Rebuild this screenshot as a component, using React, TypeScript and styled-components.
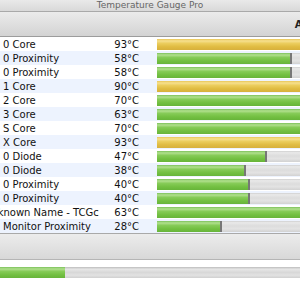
import React from "react";
import styled, { createGlobalStyle } from "styled-components";

const Global = createGlobalStyle`
  html, body { margin: 0; padding: 0; background: #fff; overflow: hidden; }
  #root { width: 300px; height: 300px; overflow: hidden; }
`;

const Window = styled.div`
  width: 300px;
  height: 300px;
  display: flex;
  flex-direction: column;
  font-family: "DejaVu Sans", "Noto Sans", sans-serif;
  background: #fff;
`;

const TitleBar = styled.div`
  height: 11px;
  border-bottom: 1px solid #a9a9a9;
  background: linear-gradient(#e9e9e9, #d9d9d9);
  display: flex;
  align-items: center;
  justify-content: center;
  font-size: 9px;
  color: #666;
  line-height: 1;
  overflow: hidden;
`;

const Toolbar = styled.div`
  height: 24px;
  border-bottom: 1px solid #9c9c9c;
  background: linear-gradient(#ebebeb, #d3d3d3);
  display: flex;
  align-items: center;
  justify-content: flex-end;
  overflow: hidden;
`;

const ToolLabel = styled.span`
  font-size: 10px;
  font-weight: bold;
  color: #222;
  margin-right: -6px;
  white-space: nowrap;
`;

const Table = styled.div`
  display: flex;
  flex-direction: column;
`;

const Row = styled.div<{ $alt: boolean }>`
  height: 14px;
  display: grid;
  grid-template-columns: 140px 17px 1fr;
  align-items: center;
  background: ${(p) => (p.$alt ? "#edf3fe" : "#ffffff")};
  font-size: 10px;
  color: #111;
  overflow: hidden;
`;

const Label = styled.span<{ $shift: number }>`
  padding-left: 3px;
  margin-left: ${(p) => p.$shift}px;
  white-space: nowrap;
  display: flex;
  justify-content: space-between;
  padding-right: 1px;
`;

const Temp = styled.span``;

const Track = styled.div`
  height: 11px;
  width: 233px;
  background: linear-gradient(#cfcfcf 0, #e9e9e9 15%, #dcdcdc 45%, #e3e3e3 70%, #d2d2d2 100%);
  display: flex;
`;

const Fill = styled.div<{ $hot: boolean }>`
  height: 100%;
  background: ${(p) =>
    p.$hot
      ? "linear-gradient(#e9c657 0, #f6e08e 18%, #ebcd5d 40%, #e0bc42 70%, #d7b03c 100%)"
      : "linear-gradient(#7cc15a 0, #b1e08e 18%, #86cb58 40%, #73c042 70%, #67b43a 100%)"};
  border-right: 2px solid #777;
  box-sizing: border-box;
`;

const Footer = styled.div`
  height: 25px;
  border-top: 1px solid #a9a9a9;
  border-bottom: 1px solid #b5b5b5;
  background: linear-gradient(#ececec, #d8d8d8);
`;

const ProgressWrap = styled.div`
  padding-top: 7px;
`;

const Progress = styled.div`
  height: 11px;
  background: linear-gradient(#bdbdbd 0, #e6e6e6 20%, #d8d8d8 50%, #e2e2e2 75%, #d0d0d0 100%);
  display: flex;
`;

const ProgressFill = styled.div`
  width: 65px;
  height: 100%;
  background: linear-gradient(#7cc15a 0, #b1e08e 18%, #86cb58 40%, #73c042 70%, #67b43a 100%);
`;

const rows: { label: string; temp: number; shift?: number }[] = [
  { label: "0 Core", temp: 93 },
  { label: "0 Proximity", temp: 58 },
  { label: "0 Proximity", temp: 58 },
  { label: "1 Core", temp: 90 },
  { label: "2 Core", temp: 70 },
  { label: "3 Core", temp: 63 },
  { label: "S Core", temp: 70 },
  { label: "X Core", temp: 93 },
  { label: "0 Diode", temp: 47 },
  { label: "0 Diode", temp: 38 },
  { label: "0 Proximity", temp: 40 },
  { label: "0 Proximity", temp: 40 },
  { label: "Unknown Name - TCGc", temp: 63, shift: -19 },
  { label: " Monitor Proximity", temp: 28 },
];

export default function App() {
  return (
    <>
      <Global />
      <Window>
        <TitleBar>Temperature Gauge Pro</TitleBar>
        <Toolbar>
          <ToolLabel>Al</ToolLabel>
        </Toolbar>
        <Table>
          {rows.map((r, i) => {
            const hot = r.temp >= 90;
            const w = Math.min(233, (r.temp / 100) * 233);
            return (
              <Row key={i} $alt={i % 2 === 1}>
                <Label $shift={r.shift ?? 0}>
                  <span>{r.label}</span>
                  <Temp>{r.temp}°C</Temp>
                </Label>
                <span />
                <Track>
                  <Fill $hot={hot} style={{ width: w }} />
                </Track>
              </Row>
            );
          })}
        </Table>
        <Footer />
        <ProgressWrap>
          <Progress>
            <ProgressFill />
          </Progress>
        </ProgressWrap>
      </Window>
    </>
  );
}
